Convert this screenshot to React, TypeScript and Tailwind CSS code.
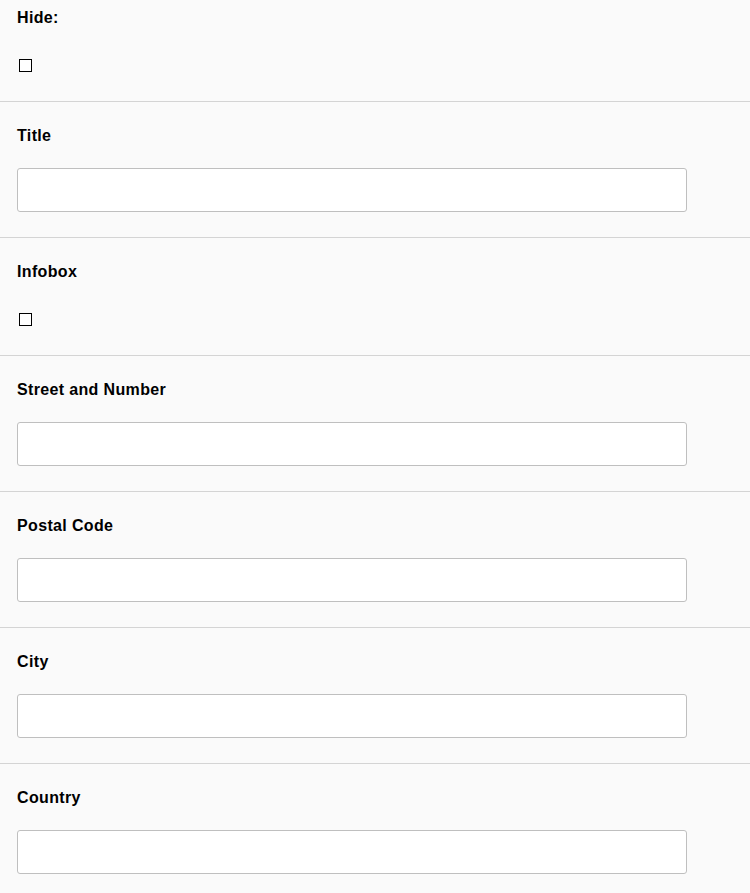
const fields: { label: string; type: 'checkbox' | 'text' }[] = [
  { label: 'Hide:', type: 'checkbox' },
  { label: 'Title', type: 'text' },
  { label: 'Infobox', type: 'checkbox' },
  { label: 'Street and Number', type: 'text' },
  { label: 'Postal Code', type: 'text' },
  { label: 'City', type: 'text' },
  { label: 'Country', type: 'text' },
];

export default function App() {
  return (
    <div className="min-h-[893px] bg-[#fafafa] font-['Liberation_Sans',Arial,sans-serif] text-black">
      {fields.map((f, i) => (
        <div
          key={f.label}
          className={
            (i === 0 ? 'pt-[6px] ' : 'pt-[22px] ') +
            (f.type === 'checkbox' ? 'pb-[29px] ' : 'pb-[25px] ') +
            (i < fields.length - 1 ? 'border-b border-[#d4d4d4] ' : '') +
            'px-[17px]'
          }
        >
          <label className="block text-[16px] leading-[24px] font-bold tracking-[0.35px]">{f.label}</label>
          {f.type === 'checkbox' ? (
            <input
              type="checkbox"
              className="appearance-none block mt-[29px] ml-[2px] w-[13px] h-[13px] border border-black bg-white rounded-none"
            />
          ) : (
            <input
              type="text"
              className="block mt-[20px] w-[670px] h-[44px] bg-white border border-[#bfbfbf] rounded-[3px] outline-none px-2"
            />
          )}
        </div>
      ))}
    </div>
  );
}
